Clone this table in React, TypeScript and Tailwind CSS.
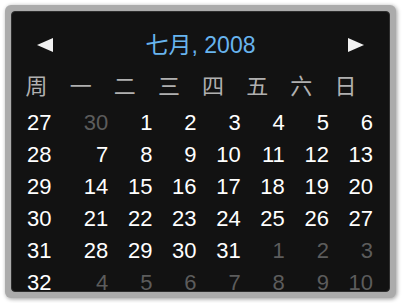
const weekdays = ["周", "一", "二", "三", "四", "五", "六", "日"];

type Day = { n: number; other?: boolean };

const weeks: { wk: number; days: Day[] }[] = [
  { wk: 27, days: [{ n: 30, other: true }, { n: 1 }, { n: 2 }, { n: 3 }, { n: 4 }, { n: 5 }, { n: 6 }] },
  { wk: 28, days: [7, 8, 9, 10, 11, 12, 13].map((n) => ({ n })) },
  { wk: 29, days: [14, 15, 16, 17, 18, 19, 20].map((n) => ({ n })) },
  { wk: 30, days: [21, 22, 23, 24, 25, 26, 27].map((n) => ({ n })) },
  {
    wk: 31,
    days: [{ n: 28 }, { n: 29 }, { n: 30 }, { n: 31 }, { n: 1, other: true }, { n: 2, other: true }, { n: 3, other: true }],
  },
  { wk: 32, days: [4, 5, 6, 7, 8, 9, 10].map((n) => ({ n, other: true })) },
];

function Arrow({ dir }: { dir: "left" | "right" }) {
  return (
    <svg width="16" height="14" viewBox="0 0 16 14" className="shrink-0">
      {dir === "left" ? (
        <polygon points="0,7 16,0 16,14" fill="#f2f2f2" />
      ) : (
        <polygon points="0,0 16,7 0,14" fill="#f2f2f2" />
      )}
    </svg>
  );
}

export default function App() {
  return (
    <div className="h-[303px] w-[403px] bg-white pl-[5px] pt-[5px] font-['Liberation_Sans','Noto_Sans_CJK_SC',sans-serif]">
      <div className="h-[293px] w-[391px] rounded-[6px] bg-[#ababab] p-[6px] shadow-[1px_1px_4px_rgba(0,0,0,0.4)]">
        <div className="h-full w-full overflow-hidden rounded-[4px] border border-[#2e2e2e] bg-[#121212] pt-[17px]">
          <div className="flex h-[32px] items-center justify-between px-[25px]">
            <Arrow dir="left" />
            <span className="text-[23px] leading-[32px] text-[#68b4ee]">七月, 2008</span>
            <Arrow dir="right" />
          </div>

          <div className="ml-[8px] mt-[10px] w-[353px]">
            <div className="grid h-[32px] grid-cols-8 text-[22px] leading-[32px] text-[#b0b0b0]">
              {weekdays.map((d) => (
                <div key={d} className="pr-[11px] text-center">
                  {d}
                </div>
              ))}
            </div>
            <div className="mt-[4px]">
              {weeks.map((w) => (
                <div key={w.wk} className="grid h-[32px] grid-cols-8 text-[22px] leading-[24px]">
                  <div className="pl-[7px] pt-[4px] text-left text-white">{w.wk}</div>
                  {w.days.map((d, i) => (
                    <div
                      key={i}
                      className={d.other ? "pt-[4px] text-right text-[#5c5c5c]" : "pt-[4px] text-right text-white"}
                    >
                      {d.n}
                    </div>
                  ))}
                </div>
              ))}
            </div>
          </div>
        </div>
      </div>
    </div>
  );
}
